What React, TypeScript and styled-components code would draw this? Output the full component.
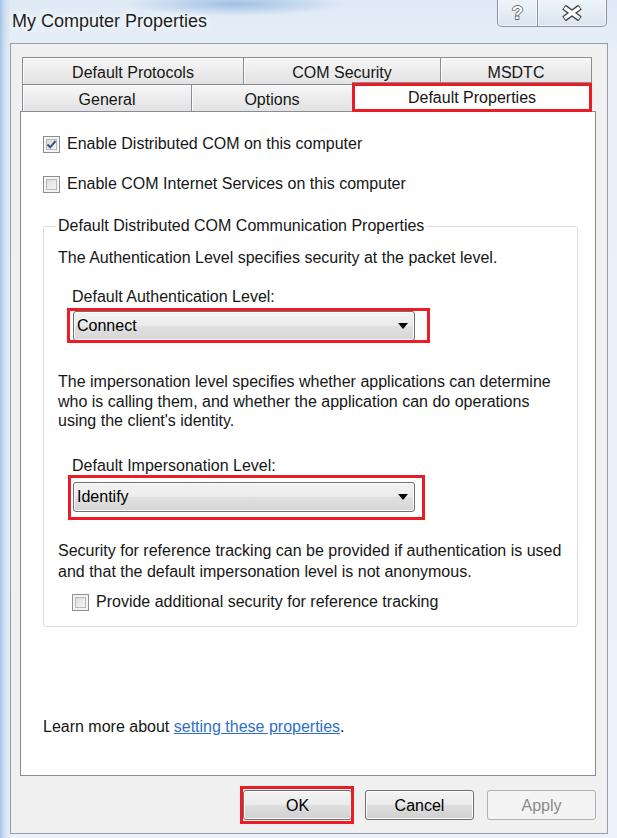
import React from "react";
import styled, { createGlobalStyle } from "styled-components";

const Global = createGlobalStyle`
  html, body { margin: 0; padding: 0; }
  body {
    width: 617px;
    height: 838px;
    overflow: hidden;
    font-family: "Liberation Sans", Arial, sans-serif;
  }
  *, *::before, *::after { box-sizing: border-box; }
`;

const Window = styled.div`
  width: 617px;
  height: 838px;
  display: flex;
  flex-direction: column;
  font-family: "Liberation Sans", Arial, sans-serif;
  font-size: 16px;
  color: #161616;
  background:
    radial-gradient(ellipse 110px 12px at 235px 4px, rgba(140, 178, 222, 0.75), rgba(140, 178, 222, 0) 100%),
    linear-gradient(90deg, rgba(150, 185, 228, 0.8) 0px, rgba(190, 212, 238, 0.5) 5px, rgba(220, 233, 246, 0) 11px),
    linear-gradient(180deg, #dfeaf6 0px, #e8f0f9 60px, #eaf2fa 100%);
`;

const TitleBar = styled.div`
  height: 43px;
  flex: 0 0 43px;
  display: flex;
  align-items: flex-start;
  padding: 0 10px 0 12px;
`;

const Title = styled.div`
  flex: 1;
  margin-top: 11px;
  font-size: 18px;
  line-height: 20px;
  color: #1e1e1e;
  text-shadow: 0 0 6px #ffffff, 0 0 10px #ffffff;
`;

const Captions = styled.div`
  display: flex;
  height: 28px;
  margin-top: -1px;
`;

const CaptionButton = styled.div<{ $w: number; $side: "left" | "right" }>`
  width: ${(p) => p.$w}px;
  height: 28px;
  display: flex;
  align-items: center;
  justify-content: center;
  border: 1px solid rgba(70, 86, 108, 0.6);
  border-top: none;
  ${(p) => (p.$side === "right" ? "border-left: none;" : "")}
  border-radius: ${(p) => (p.$side === "left" ? "0 0 0 5px" : "0 0 5px 0")};
  background: linear-gradient(180deg, #eef4fa 0%, #e4edf6 50%, #d8e4f0 100%);
  box-shadow: inset 0 0 0 1px rgba(255, 255, 255, 0.7);
`;

const HelpGlyph = styled.span`
  font-family: "Liberation Sans", Arial, sans-serif;
  font-weight: bold;
  font-size: 19px;
  line-height: 20px;
  color: #ffffff;
  -webkit-text-stroke: 1.3px #3a3f46;
  paint-order: stroke fill;
  margin-top: 1px;
`;

const Client = styled.div`
  flex: 1;
  margin: 0 9px 4px 10px;
  border: 1px solid #939fab;
  background: #f0f0f0;
  display: flex;
  flex-direction: column;
  padding: 13px 11px 0 9px;
`;

const TabStrip = styled.div`
  display: flex;
  flex-direction: column;
  margin: 0 4px 0 2px;
`;

const TabRow = styled.div`
  display: flex;
  height: 27px;
`;

const Tab = styled.div<{ $w: number; $selected?: boolean }>`
  position: relative;
  flex: 0 0 ${(p) => p.$w}px;
  display: flex;
  align-items: center;
  justify-content: center;
  border: 1px solid #898c95;
  border-bottom: none;
  margin-left: -1px;
  &:first-child { margin-left: 0; }
  line-height: 20px;
  padding-top: 3px;
  background: linear-gradient(180deg, #f7f7f7 0%, #ececec 50%, #e2e2e2 100%);
  box-shadow: inset 1px 1px 0 #fbfbfb;
  ${(p) =>
    p.$selected
      ? `
    z-index: 2;
    height: 30px;
    margin-top: -2px;
    background: #ffffff;
    box-shadow: none;
    padding-top: 1px;
  `
      : ""}
`;

const RedMark = styled.span<{ $t: number; $r: number; $b: number; $l: number }>`
  position: absolute;
  top: ${(p) => p.$t}px;
  right: ${(p) => p.$r}px;
  bottom: ${(p) => p.$b}px;
  left: ${(p) => p.$l}px;
  border: 3px solid #ec1c24;
  pointer-events: none;
  z-index: 3;
`;

const Panel = styled.div`
  flex: 0 0 665px;
  border: 1px solid #898c95;
  background: #ffffff;
  display: flex;
  flex-direction: column;
  padding: 23px 0 38px 22px;
`;

const CheckRow = styled.label<{ $indent?: number; $top?: number }>`
  display: flex;
  align-items: center;
  gap: 7px;
  height: 18px;
  line-height: 20px;
  margin-left: ${(p) => p.$indent ?? 0}px;
  margin-top: ${(p) => p.$top ?? 0}px;
`;

const Box = styled.span`
  width: 17px;
  height: 17px;
  flex: 0 0 17px;
  border: 1px solid #8e8f8f;
  background: linear-gradient(135deg, #d2d2d2 0%, #eeeeee 60%, #f8f8f8 100%);
  box-shadow: inset 0 0 0 2px #f4f4f4, inset 0 0 0 3px #b9b9b9;
  display: flex;
  align-items: center;
  justify-content: center;
`;

const Group = styled.fieldset`
  width: 535px;
  margin: 23px 0 0 0;
  border: 1px solid #d5dfe5;
  border-radius: 3px;
  padding: 12px 0 15px 14px;
  display: flex;
  flex-direction: column;
  min-width: 0;
`;

const Legend = styled.legend`
  padding: 0 2px;
  margin-left: -2px;
  line-height: 20px;
  font-size: 16px;
`;

const Text = styled.div<{ $lh?: number; $top?: number }>`
  line-height: ${(p) => p.$lh ?? 20}px;
  margin-top: ${(p) => p.$top ?? 0}px;
`;

const FieldLabel = styled.div<{ $top: number }>`
  line-height: 20px;
  margin: ${(p) => p.$top}px 0 0 14px;
`;

const Select = styled.div<{ $top: number }>`
  position: relative;
  width: 342px;
  height: 30px;
  margin: ${(p) => p.$top}px 0 0 15px;
  border: 1px solid #707070;
  border-radius: 3px;
  background: linear-gradient(180deg, #f3f3f3 0%, #ebebeb 48%, #e0e0e0 52%, #d6d6d6 100%);
  box-shadow: inset 0 0 0 1px #fafafa;
  display: flex;
  align-items: center;
  justify-content: space-between;
  padding: 0 6px 0 3px;
  line-height: 20px;
  color: #000;
`;

const Arrow = styled.span`
  width: 0;
  height: 0;
  border-left: 5px solid transparent;
  border-right: 5px solid transparent;
  border-top: 6px solid #000;
`;

const Footer = styled.div`
  margin-top: auto;
  line-height: 20px;
`;

const Link = styled.a`
  color: #2e6fcc;
  text-decoration: underline;
  cursor: pointer;
`;

const ButtonRow = styled.div`
  display: flex;
  justify-content: flex-end;
  gap: 13px;
  margin-top: 14px;
`;

const Button = styled.button<{ $disabled?: boolean }>`
  position: relative;
  width: 109px;
  height: 30px;
  font-family: "Liberation Sans", Arial, sans-serif;
  font-size: 16px;
  border-radius: 3px;
  padding: 1px 0 0;
  border: 1px solid ${(p) => (p.$disabled ? "#adb2b5" : "#707070")};
  color: ${(p) => (p.$disabled ? "#8a8a8a" : "#000")};
  background: ${(p) =>
    p.$disabled
      ? "#f4f4f4"
      : "linear-gradient(180deg, #f3f3f3 0%, #ebebeb 48%, #dddddd 52%, #d1d1d1 100%)"};
  box-shadow: inset 0 0 0 1px ${(p) => (p.$disabled ? "#f4f4f4" : "#fcfcfc")};
`;

const CheckMark = () => (
  <svg width="11" height="11" viewBox="0 0 11 11">
    <path d="M1.5 5.5 L4.2 8.3 L9.5 2" fill="none" stroke="#3b5286" strokeWidth="2" />
  </svg>
);

const CloseIcon = () => (
  <svg width="22" height="16" viewBox="0 0 22 16">
    <path d="M3 2 L19 14 M19 2 L3 14" stroke="#3a3f46" strokeWidth="6" strokeLinecap="butt" fill="none" />
    <path d="M3.6 2.6 L18.4 13.4 M18.4 2.6 L3.6 13.4" stroke="#ffffff" strokeWidth="3.6" fill="none" />
  </svg>
);

const Checkbox = ({ checked }: { checked?: boolean }) => (
  <Box>{checked ? <CheckMark /> : null}</Box>
);

export default function App() {
  return (
    <>
      <Global />
      <Window>
        <TitleBar>
          <Title>My Computer Properties</Title>
          <Captions>
            <CaptionButton $w={41} $side="left">
              <HelpGlyph>?</HelpGlyph>
            </CaptionButton>
            <CaptionButton $w={69} $side="right">
              <CloseIcon />
            </CaptionButton>
          </Captions>
        </TitleBar>
        <Client>
          <TabStrip>
            <TabRow>
              <Tab $w={222}>Default Protocols</Tab>
              <Tab $w={198}>COM Security</Tab>
              <Tab $w={152}>MSDTC</Tab>
            </TabRow>
            <TabRow>
              <Tab $w={170}>General</Tab>
              <Tab $w={162}>Options</Tab>
              <Tab $w={240} $selected>
                Default Properties
                <RedMark $t={0} $r={-1} $b={0} $l={-1} />
              </Tab>
            </TabRow>
          </TabStrip>
          <Panel>
            <CheckRow>
              <Checkbox checked />
              Enable Distributed COM on this computer
            </CheckRow>
            <CheckRow $top={22}>
              <Checkbox />
              Enable COM Internet Services on this computer
            </CheckRow>
            <Group>
              <Legend>Default Distributed COM Communication Properties</Legend>
              <Text>The Authentication Level specifies security at the packet level.</Text>
              <FieldLabel $top={19}>Default Authentication Level:</FieldLabel>
              <Select $top={4}>
                <span>Connect</span>
                <Arrow />
                <RedMark $t={-4} $r={-16} $b={-3} $l={-7} />
              </Select>
              <Text $lh={19.5} $top={31}>
                The impersonation level specifies whether applications can determine
                <br />
                who is calling them, and whether the application can do operations
                <br />
                using the client's identity.
              </Text>
              <FieldLabel $top={25.5}>Default Impersonation Level:</FieldLabel>
              <Select $top={6}>
                <span>Identify</span>
                <Arrow />
                <RedMark $t={-8} $r={-11} $b={-9} $l={-6} />
              </Select>
              <Text $lh={21} $top={27.5}>
                Security for reference tracking can be provided if authentication is used
                <br />
                and that the default impersonation level is not anonymous.
              </Text>
              <CheckRow $indent={14} $top={11.5}>
                <Checkbox />
                Provide additional security for reference tracking
              </CheckRow>
            </Group>
            <Footer>
              Learn more about <Link>setting these properties</Link>.
            </Footer>
          </Panel>
          <ButtonRow>
            <Button>
              OK
              <RedMark $t={-5} $r={-3} $b={-5} $l={-4} />
            </Button>
            <Button>Cancel</Button>
            <Button $disabled>Apply</Button>
          </ButtonRow>
        </Client>
      </Window>
    </>
  );
}
